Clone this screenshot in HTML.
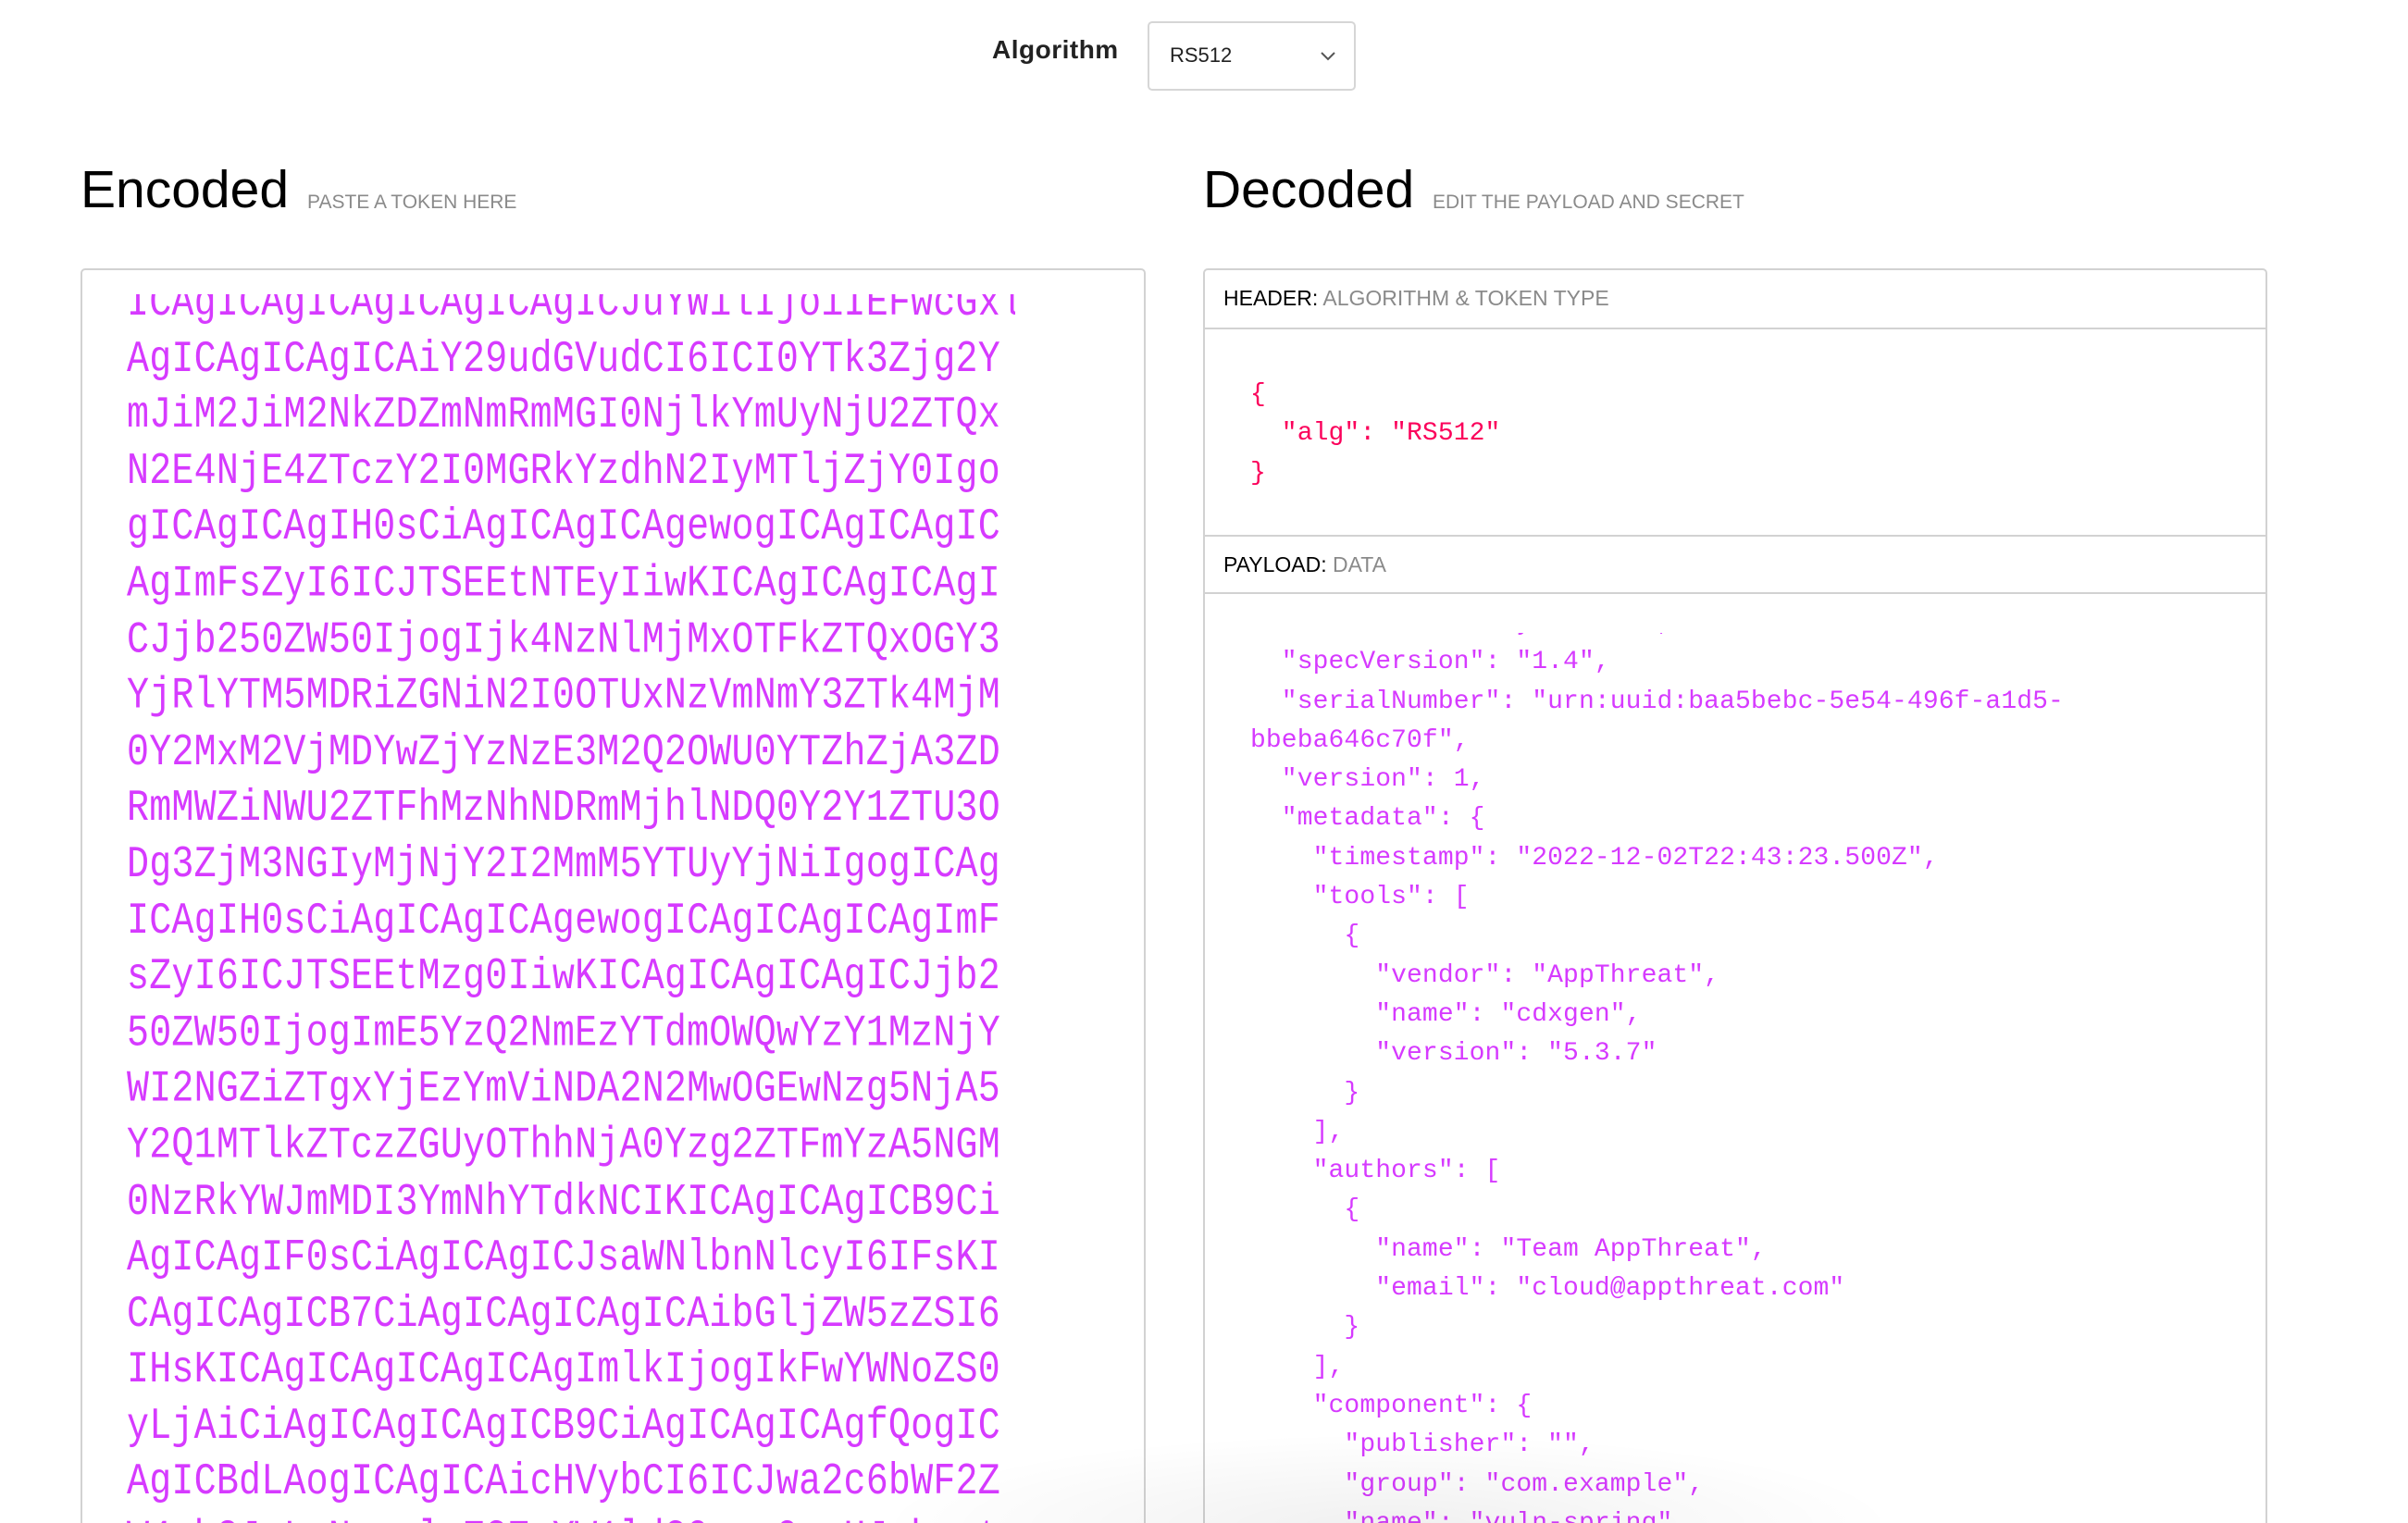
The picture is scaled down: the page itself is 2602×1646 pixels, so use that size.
<!DOCTYPE html>
<html><head><meta charset="utf-8">
<style>
*{margin:0;padding:0;box-sizing:border-box}
html,body{width:2602px;height:1646px;overflow:hidden;background:#fff;font-family:"Liberation Sans",sans-serif}
#wrap{position:relative;width:2602px;height:1646px;overflow:hidden}
.abs{position:absolute}
.alg{left:1072px;top:38px;font-size:28px;font-weight:bold;color:#222;letter-spacing:0.5px}
.sel{left:1240px;top:23px;width:225px;height:75px;border:2px solid #d6d6d6;border-radius:5px;font-size:22px;color:#222;padding:22px 0 0 22px}
.h1{font-size:57px;color:#000;top:172px}
.sub{font-size:21px;color:#8a8a8a;top:207px}
.box{border:2px solid #d2d2d2;border-radius:5px;background:#fff}
.enc{left:87px;top:290px;width:1151px;height:1400px}
.encclip{left:137px;top:318px;width:960px;height:1340px;overflow:hidden}
.enctxt{font-family:"Liberation Mono",monospace;font-size:40px;letter-spacing:0.2px;line-height:50.6px;color:#d63aff;white-space:pre;margin-top:-19px;transform:scaleY(1.2);transform-origin:0 0}
.dec{left:1300px;top:290px;width:1150px;height:1400px}
.row{position:absolute;left:0;width:100%;border-bottom:2px solid #d2d2d2;font-size:23px;padding-left:20px;color:#000}
.row span{color:#8a8a8a}
.mono{font-family:"Liberation Mono",monospace;font-size:28px;letter-spacing:0.1px;line-height:42.3px;white-space:pre}
.fade{left:900px;top:1540px;width:1200px;height:220px;background:radial-gradient(ellipse at center,rgba(0,0,0,0.06),rgba(0,0,0,0) 65%)}
</style></head><body><div id="wrap">
<div class="abs alg">Algorithm</div>
<div class="abs sel">RS512
<svg class="abs" style="left:184px;top:30px" width="18" height="12" viewBox="0 0 18 12"><path d="M2 2 L9 9 L16 2" fill="none" stroke="#555" stroke-width="2"/></svg></div>

<div class="abs h1" style="left:87px">Encoded</div>
<div class="abs sub" style="left:332px">PASTE A TOKEN HERE</div>
<div class="abs h1" style="left:1300px">Decoded</div>
<div class="abs sub" style="left:1548px">EDIT THE PAYLOAD AND SECRET</div>

<div class="abs box enc"></div>
<div class="abs encclip"><div class="enctxt">ICAgICAgICAgICAgICAgICJuYW1lIjoiIEFwcGxl
AgICAgICAgICAiY29udGVudCI6ICI0YTk3Zjg2Y
mJiM2JiM2NkZDZmNmRmMGI0NjlkYmUyNjU2ZTQx
N2E4NjE4ZTczY2I0MGRkYzdhN2IyMTljZjY0Igo
gICAgICAgIH0sCiAgICAgICAgewogICAgICAgIC
AgImFsZyI6ICJTSEEtNTEyIiwKICAgICAgICAgI
CJjb250ZW50IjogIjk4NzNlMjMxOTFkZTQxOGY3
YjRlYTM5MDRiZGNiN2I0OTUxNzVmNmY3ZTk4MjM
0Y2MxM2VjMDYwZjYzNzE3M2Q2OWU0YTZhZjA3ZD
RmMWZiNWU2ZTFhMzNhNDRmMjhlNDQ0Y2Y1ZTU3O
Dg3ZjM3NGIyMjNjY2I2MmM5YTUyYjNiIgogICAg
ICAgIH0sCiAgICAgICAgewogICAgICAgICAgImF
sZyI6ICJTSEEtMzg0IiwKICAgICAgICAgICJjb2
50ZW50IjogImE5YzQ2NmEzYTdmOWQwYzY1MzNjY
WI2NGZiZTgxYjEzYmViNDA2N2MwOGEwNzg5NjA5
Y2Q1MTlkZTczZGUyOThhNjA0Yzg2ZTFmYzA5NGM
0NzRkYWJmMDI3YmNhYTdkNCIKICAgICAgICB9Ci
AgICAgIF0sCiAgICAgICJsaWNlbnNlcyI6IFsKI
CAgICAgICB7CiAgICAgICAgICAibGljZW5zZSI6
IHsKICAgICAgICAgICAgImlkIjogIkFwYWNoZS0
yLjAiCiAgICAgICAgICB9CiAgICAgICAgfQogIC
AgICBdLAogICAgICAicHVybCI6ICJwa2c6bWF2Z
W4vb3JnLnNwcmluZ2ZyYW1ld29yay9zcHJpbmct
YmVhbnNANS4zLjIwIgogICAgfQ==</div></div>

<div class="abs box dec">
  <div class="row" style="top:0;height:64px;padding-top:17px">HEADER: <span>ALGORITHM &amp; TOKEN TYPE</span></div>
  <div class="abs mono" style="left:49px;top:114px;color:#fb015b">{
  "alg": "RS512"
}</div>
  <div class="row" style="top:286px;height:64px;padding-top:17px;border-top:2px solid #d2d2d2">PAYLOAD: <span>DATA</span></div>
  <div class="abs" style="left:0;top:392px;width:1140px;height:1000px;overflow:hidden">
  <div class="mono" style="position:absolute;left:49px;top:-31px;color:#d63aff">  "bomFormat": "CycloneDX",
  "specVersion": "1.4",
  "serialNumber": "urn:uuid:baa5bebc-5e54-496f-a1d5-
bbeba646c70f",
  "version": 1,
  "metadata": {
    "timestamp": "2022-12-02T22:43:23.500Z",
    "tools": [
      {
        "vendor": "AppThreat",
        "name": "cdxgen",
        "version": "5.3.7"
      }
    ],
    "authors": [
      {
        "name": "Team AppThreat",
        "email": "cloud@appthreat.com"
      }
    ],
    "component": {
      "publisher": "",
      "group": "com.example",
      "name": "vuln-spring",
      "version": "0.0.1-SNAPSHOT",</div></div>
</div>
<div class="abs fade"></div>
</div></body></html>
